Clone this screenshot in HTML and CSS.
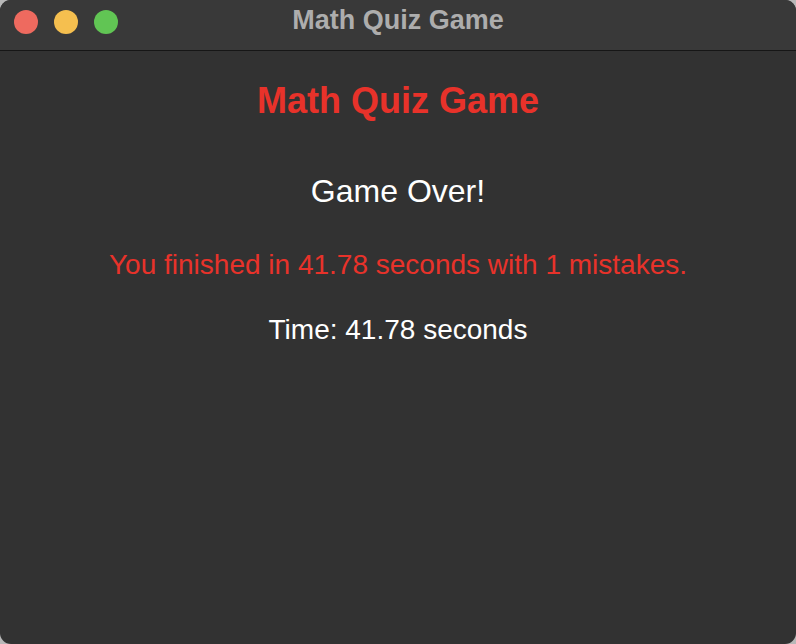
FILE: index.html
```html
<!DOCTYPE html>
<html>
<head>
<meta charset="utf-8">
<title>Math Quiz Game</title>
<link rel="stylesheet" href="styles.css">
</head>
<body>
<div class="window">
  <div class="titlebar">
    <div class="lights">
      <span class="light red"></span>
      <span class="light yellow"></span>
      <span class="light green"></span>
    </div>
    <div class="wintitle">Math Quiz Game</div>
  </div>
  <div class="content">
    <h1 class="heading">Math Quiz Game</h1>
    <p class="over">Game Over!</p>
    <p class="result">You finished in 41.78 seconds with 1 mistakes.</p>
    <p class="time">Time: 41.78 seconds</p>
  </div>
</div>
</body>
</html>
```

FILE: styles.css
```css
html, body {
  margin: 0;
  padding: 0;
  background: #b8b8b8;
}
body {
  width: 796px;
  height: 644px;
  overflow: hidden;
  font-family: "Liberation Sans", Arial, sans-serif;
}
.window {
  width: 796px;
  height: 644px;
  border-radius: 11px;
  overflow: hidden;
  background: #323232;
  display: flex;
  flex-direction: column;
}
.titlebar {
  position: relative;
  height: 50px;
  background: #393939;
  border-bottom: 1px solid #161616;
  flex: none;
}
.lights {
  display: flex;
  gap: 16px;
  padding: 10px 0 0 14px;
}
.light {
  width: 24px;
  height: 24px;
  border-radius: 50%;
  display: block;
}
.red { background: #ee6a5f; }
.yellow { background: #f5bf4f; }
.green { background: #61c554; }
.wintitle {
  position: absolute;
  left: 0;
  right: 0;
  top: 7px;
  text-align: center;
  font-size: 27px;
  line-height: 27px;
  font-weight: bold;
  color: #adadad;
}
.content {
  padding-top: 32px;
  text-align: center;
}
.heading {
  margin: 0;
  font-size: 36px;
  line-height: 36px;
  font-weight: bold;
  color: #e8322a;
}
.over {
  margin: 56px 0 0;
  font-size: 32px;
  line-height: 32px;
  color: #ffffff;
}
.result {
  margin: 44px 0 0;
  font-size: 28px;
  line-height: 28px;
  color: #e8322a;
}
.time {
  margin: 37px 0 0;
  font-size: 28px;
  line-height: 28px;
  color: #ffffff;
}
```
